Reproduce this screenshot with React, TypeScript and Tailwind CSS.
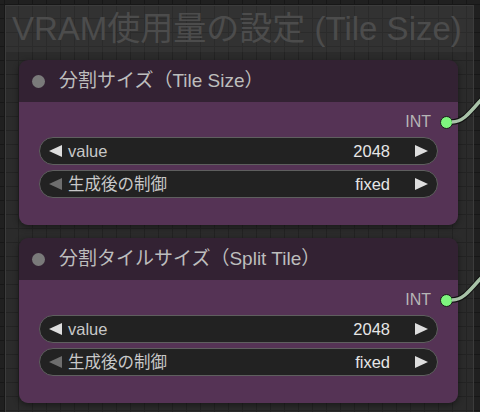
import React from 'react';

const FONT = 'font-["Liberation_Sans","Noto_Sans_CJK_JP",sans-serif]';

interface WidgetProps {
    label: string;
    value: string;
    dimLeft?: boolean;
}

function Arrow({ dir, dim }: { dir: 'left' | 'right'; dim?: boolean }) {
    const fill = dim ? '#6e6e6e' : '#dedede';
    return (
        <svg width="14" height="14" viewBox="0 0 14 14" className="shrink-0">
            {dir === 'left'
                ? <polygon points="14,1 14,13 1,7" fill={fill} />
                : <polygon points="0,1 0,13 13,7" fill={fill} />}
        </svg>
    );
}

function Widget({ label, value, dimLeft }: WidgetProps) {
    return (
        <div className="h-[28px] rounded-full bg-[#222222] border border-[#5f5f5f] flex items-center pl-[8px] pr-[8px] text-[16.5px]">
            <Arrow dir="left" dim={dimLeft} />
            <span className="ml-[6px] text-[#c8c8c8]">{label}</span>
            <span className="ml-auto mr-[25px] text-[#e6e6e6]">{value}</span>
            <Arrow dir="right" />
        </div>
    );
}

function PrimitiveNode({ title }: { title: string }) {
    return (
        <div className="w-[439px] ml-[13px] rounded-[9px] overflow-hidden shadow-[0_2px_6px_rgba(0,0,0,0.45)]">
            <div className="h-[42px] bg-[#332233] flex items-center pl-[13px]">
                <span className="w-[13px] h-[13px] rounded-full bg-[#7a7a7a]" />
                <span className="ml-[14px] text-[19px] text-[#bdbdbd]">{title}</span>
            </div>
            <div className="bg-[#553355] pt-[10px] pb-[27px] px-[20px]">
                <div className="h-[20px] flex items-center justify-end -mr-[15px]">
                    <span className="text-[16px] text-[#b5b5b5]">INT</span>
                    <span className="ml-[9px] w-[13px] h-[13px] rounded-full bg-[#7ef57e] border border-[#1a1a1a]" />
                </div>
                <div className="mt-[5px] flex flex-col gap-[5px]">
                    <Widget label="value" value="2048" />
                    <Widget label="生成後の制御" value="fixed" dimLeft />
                </div>
            </div>
        </div>
    );
}

export default function App() {
    return (
        <div className={`relative w-[480px] h-[412px] overflow-hidden bg-[#202020] bg-[linear-gradient(to_right,#171717_1px,transparent_1px),linear-gradient(to_bottom,#171717_1px,transparent_1px)] bg-[size:14px_14px] bg-[position:4px_4px] pt-[5px] pl-[5px] ${FONT}`}>
            <div className="w-[469px] h-[440px] border-[1.5px] border-[#3c3c3c] bg-white/[0.05]">
                <div className="h-[46px] bg-white/[0.035] pl-[6px] pt-[3px] text-[33px] leading-[40px] text-[#4c4c4c] whitespace-nowrap">
                    VRAM使用量の設定 (Tile Size)
                </div>
                <div className="pt-[8px] flex flex-col gap-[13px]">
                    <PrimitiveNode title="分割サイズ（Tile Size）" />
                    <PrimitiveNode title="分割タイルサイズ（Split Tile）" />
                </div>
            </div>

            {/* links leaving the INT outputs */}
            <svg className="absolute inset-0 pointer-events-none" width="480" height="412">
                {[122, 300].map((y) => (
                    <g key={y}>
                        <path d={`M452 ${y} C464 ${y}, 470 ${y - 10}, 488 ${y - 30}`} stroke="#111" strokeWidth="5.5" fill="none" />
                        <path d={`M452 ${y} C464 ${y}, 470 ${y - 10}, 488 ${y - 30}`} stroke="#a8c2a8" strokeWidth="3.5" fill="none" />
                    </g>
                ))}
            </svg>
        </div>
    );
}
